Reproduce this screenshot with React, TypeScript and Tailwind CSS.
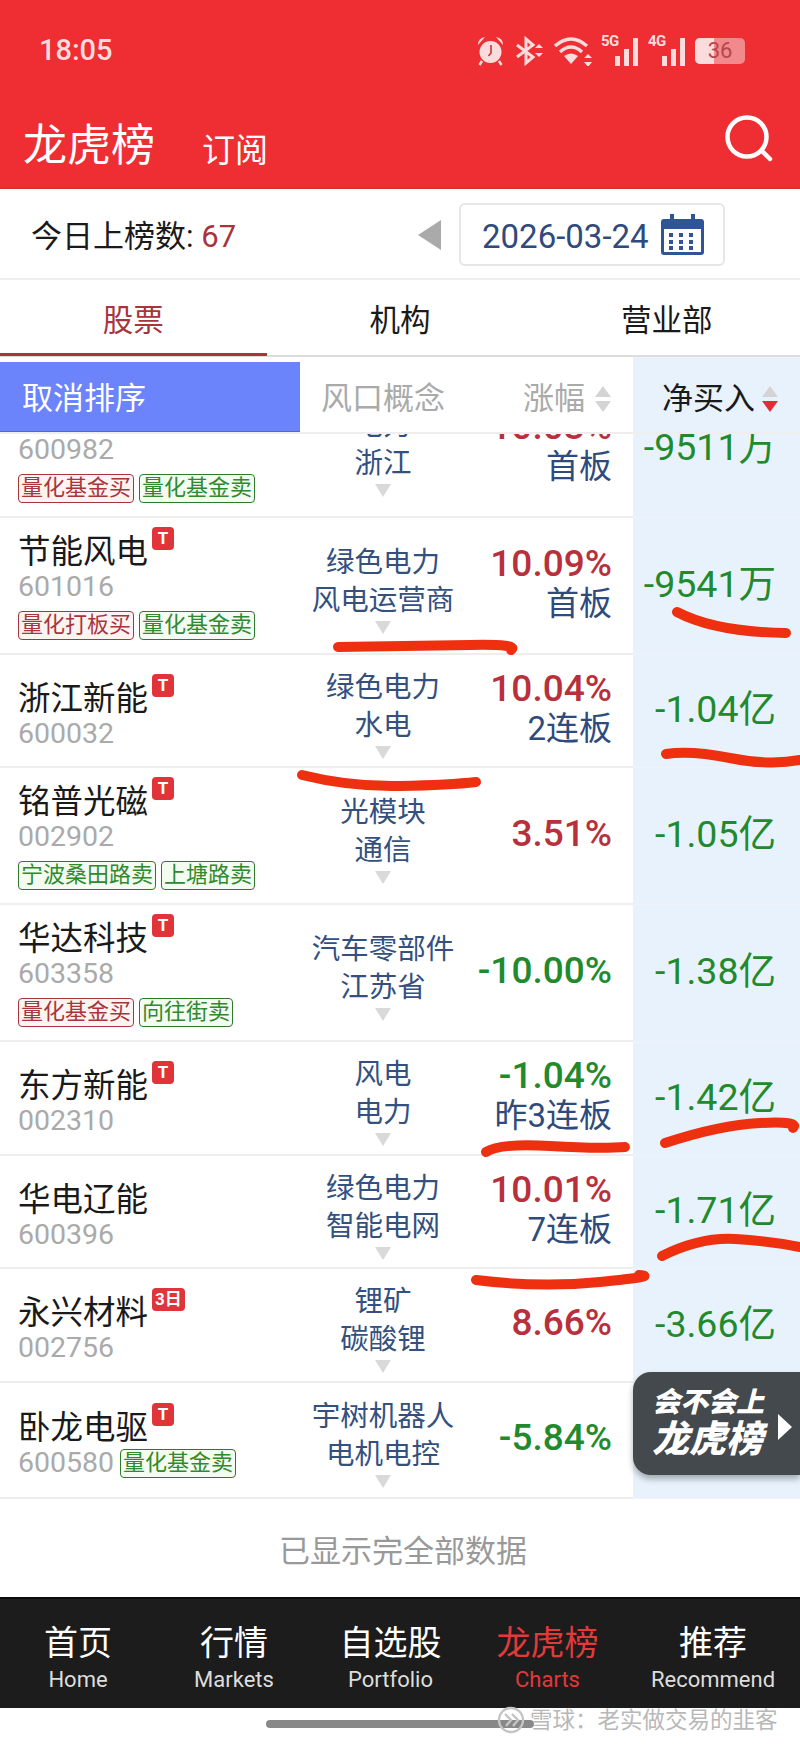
import React from 'react';

type Tag = { text: string; kind: 'buy' | 'sell' };

type Row = {
  name: string;
  badge?: string;
  code: string;
  tags?: Tag[];
  inlineTag?: Tag;
  concepts: [string, string];
  pct: string;
  up: boolean;
  board?: string;
  net: string;
};

const buy = (text: string): Tag => ({ text, kind: 'buy' });
const sell = (text: string): Tag => ({ text, kind: 'sell' });

const rows: (Row & { height: string })[] = [
  { height: 'h-[137px]', name: '节能风电', badge: 'T', code: '601016', tags: [buy('量化打板买'), sell('量化基金卖')], concepts: ['绿色电力', '风电运营商'], pct: '10.09%', up: true, board: '首板', net: '-9541万' },
  { height: 'h-[113px]', name: '浙江新能', badge: 'T', code: '600032', concepts: ['绿色电力', '水电'], pct: '10.04%', up: true, board: '2连板', net: '-1.04亿' },
  { height: 'h-[137px]', name: '铭普光磁', badge: 'T', code: '002902', tags: [sell('宁波桑田路卖'), sell('上塘路卖')], concepts: ['光模块', '通信'], pct: '3.51%', up: true, net: '-1.05亿' },
  { height: 'h-[137px]', name: '华达科技', badge: 'T', code: '603358', tags: [buy('量化基金买'), sell('向往街卖')], concepts: ['汽车零部件', '江苏省'], pct: '-10.00%', up: false, net: '-1.38亿' },
  { height: 'h-[114px]', name: '东方新能', badge: 'T', code: '002310', concepts: ['风电', '电力'], pct: '-1.04%', up: false, board: '昨3连板', net: '-1.42亿' },
  { height: 'h-[113px]', name: '华电辽能', code: '600396', concepts: ['绿色电力', '智能电网'], pct: '10.01%', up: true, board: '7连板', net: '-1.71亿' },
  { height: 'h-[114px]', name: '永兴材料', badge: '3日', code: '002756', concepts: ['锂矿', '碳酸锂'], pct: '8.66%', up: true, net: '-3.66亿' },
  { height: 'h-[116px]', name: '卧龙电驱', badge: 'T', code: '600580', inlineTag: sell('量化基金卖'), concepts: ['宇树机器人', '电机电控'], pct: '-5.84%', up: false, net: '-3.72亿' },
];

const clippedRow: Row = { name: '宁波能源', badge: 'T', code: '600982', tags: [buy('量化基金买'), sell('量化基金卖')], concepts: ['电力', '浙江'], pct: '10.03%', up: true, board: '首板', net: '-9511万' };

const navItems = [
  { zh: '首页', en: 'Home' },
  { zh: '行情', en: 'Markets' },
  { zh: '自选股', en: 'Portfolio' },
  { zh: '龙虎榜', en: 'Charts', active: true },
  { zh: '推荐', en: 'Recommend' },
];

const TagChip = ({ tag }: { tag: Tag }) => (
  <span
    className={`h-[29px] px-[2px] rounded-[4px] border text-[22px] leading-[26px] whitespace-nowrap ${
      tag.kind === 'buy'
        ? 'border-[#a8343c] bg-[#fdf4f2] text-[#a8343c]'
        : 'border-[#2c7a2c] bg-[#f4fbf1] text-[#2f8a2f]'
    }`}
  >
    {tag.text}
  </span>
);

const SortArrows = ({ active }: { active?: boolean }) => (
  <svg width="16" height="26" viewBox="0 0 16 26" className="shrink-0">
    <polygon points="8,0 16,11 0,11" fill="#d4d4d4" />
    <polygon points="8,26 16,15 0,15" fill={active ? '#dc2f36' : '#d4d4d4'} />
  </svg>
);

const TableRow = ({ row }: { row: Row }) => (
  <div className="grid grid-cols-[300px_166px_167px_167px] h-full">
    <div className={`flex flex-col justify-center pl-[18px] border-b-2 border-[#eeeeee] ${row.tags ? '' : 'pt-[8px]'}`}>
      <div className="flex h-[38px] items-center pt-[4px]">
        <span className="text-[32.5px] leading-[38px] text-[#1a1a1a] whitespace-nowrap">{row.name}</span>
        {row.badge && (
          <span className="self-start -mt-[8px] ml-[4px] h-[23px] px-[3px] min-w-[22px] rounded-[4px] bg-[#e1333a] text-white text-[17px] leading-[23px] font-bold text-center">
            {row.badge}
          </span>
        )}
      </div>
      <div className="flex h-[36px] items-center gap-[6px]">
        <span className="text-[28.5px] leading-[36px] text-[#aaaaaa]">{row.code}</span>
        {row.inlineTag && <TagChip tag={row.inlineTag} />}
      </div>
      {row.tags && (
        <div className="flex gap-[5px] mt-[6px]">
          {row.tags.map((t) => (
            <TagChip key={t.text} tag={t} />
          ))}
        </div>
      )}
    </div>
    <div className="flex flex-col items-center justify-center pt-[7px] border-b-2 border-[#eeeeee] text-[28.5px] leading-[38px] text-[#34507f]">
      <span className="whitespace-nowrap">{row.concepts[0]}</span>
      <span className="whitespace-nowrap">{row.concepts[1]}</span>
      <svg width="16" height="14" viewBox="0 0 16 14" className="mt-[1px]">
        <polygon points="0,0 16,0 8,13" fill="#d9d9d9" />
      </svg>
    </div>
    <div className="flex flex-col items-end justify-center pr-[21px] pb-[4px] border-b-2 border-[#eeeeee]">
      <span className={`text-[37px] leading-[40px] font-medium ${row.up ? 'text-[#b8303c]' : 'text-[#228a2c]'}`}>{row.pct}</span>
      {row.board && <span className="text-[33px] leading-[40px] text-[#2f4a7c] whitespace-nowrap">{row.board}</span>}
    </div>
    <div className="flex items-center justify-end pr-[24px] pb-[4px] bg-[#e8f2fc] border-b border-[#f0f4f8] text-[37.5px] leading-[40px] text-[#228a2c] whitespace-nowrap">
      {row.net}
    </div>
  </div>
);

const StatusIcons = () => (
  <div className="flex items-center text-[#fbdcdc]">
    {/* alarm */}
    <svg width="29" height="30" viewBox="0 0 29 30" fill="currentColor">
      <circle cx="14.5" cy="16" r="11" />
      <path d="M2 9 Q2 2 9 1 Z M27 9 Q27 2 20 1 Z" />
      <path d="M6 25 L3.5 29 M23 25 L25.5 29" stroke="currentColor" strokeWidth="2.5" />
      <path d="M15 9 V17 L12.5 20" stroke="#c9343c" strokeWidth="1.6" fill="none" />
    </svg>
    {/* bluetooth */}
    <svg width="29" height="30" viewBox="0 0 29 30" className="ml-[10px]" fill="none" stroke="currentColor" strokeWidth="3">
      <path d="M2 9 L18 21 L11 27 V3 L18 9 L2 21" />
      <path d="M24 8 L28 12 H20 Z M24 21 L28 17 H20 Z" fill="currentColor" stroke="none" />
    </svg>
    {/* wifi */}
    <svg width="38" height="30" viewBox="0 0 38 30" className="ml-[10px]" fill="none" stroke="currentColor" strokeWidth="3.4">
      <path d="M1 10 Q17 -4 33 10" />
      <path d="M6 16 Q17 6 28 16" />
      <path d="M17 28 L10 20 Q17 15 24 20 Z" fill="currentColor" stroke="none" />
      <path d="M34 18 L38 22 H30 Z M34 31 L38 26 H30 Z" fill="currentColor" stroke="none" />
    </svg>
    {['5G', '4G'].map((g, i) => (
      <div key={g} className={`relative w-[37px] h-[30px] ${i === 0 ? 'ml-[9px]' : 'ml-[10px]'}`}>
        <span className="absolute left-0 -top-[3px] text-[15px] leading-[16px] font-bold tracking-[-0.5px]">{g}</span>
        <div className="absolute right-0 bottom-0 flex items-end gap-[4px]">
          <div className="w-[5px] h-[10px] bg-current" />
          <div className="w-[5px] h-[17px] bg-current" />
          <div className="w-[5px] h-[28px] bg-current" />
        </div>
      </div>
    ))}
    {/* battery */}
    <div className="relative ml-[10px] w-[50px] h-[26px] rounded-[5px] bg-[#f28a8d] overflow-hidden flex items-center justify-center">
      <div className="absolute left-0 top-0 bottom-0 w-[19px] bg-[#fbdcdc]" />
      <span className="relative text-[22px] leading-[26px] text-[#b8454b]">36</span>
    </div>
  </div>
);

const Scribbles = () => (
  <svg width="800" height="1744" viewBox="0 0 800 1744" className="absolute left-0 top-0 pointer-events-none" fill="none" stroke="#ee3011" strokeWidth="10" strokeLinecap="round">
    <path d="M677 612 Q 715 632 786 633" />
    <path d="M338 647 Q 420 646 470 645 T 511 650" />
    <path d="M666 754 Q 690 750 730 758 T 800 760" />
    <path d="M302 775 Q 350 787 400 786 T 476 782" />
    <path d="M486 1152 Q 500 1143 550 1146 T 625 1147" />
    <path d="M665 1143 Q 720 1125 760 1123 T 793 1128" />
    <path d="M662 1256 Q 700 1237 735 1239 T 800 1247" />
    <path d="M476 1280 Q 540 1288 600 1282 T 639 1275" />
  </svg>
);

export default function App() {
  return (
    <div className="relative w-[800px] h-[1744px] overflow-hidden bg-white font-['Roboto','Noto_Sans_CJK_SC',sans-serif]">
      {/* Header */}
      <header className="h-[189px] bg-[#ee2e33] border-b-2 border-[#c9383c] flex flex-col">
        <div className="h-[102px] shrink-0 flex items-center justify-between pl-[39px] pr-[55px]">
          <span className="text-[29px] font-medium text-[#fbdcdc]">18:05</span>
          <StatusIcons />
        </div>
        <div className="flex items-center justify-between pl-[23px] pr-[26px] mt-[14px]">
          <div className="flex items-end">
            <span className="text-[44px] leading-[60px] text-white">龙虎榜</span>
            <span className="ml-[47px] text-[33px] leading-[50px] text-white">订阅</span>
          </div>
          <svg width="50" height="48" viewBox="0 0 50 48" fill="none" stroke="white" strokeWidth="4.5" className="-mt-[14px]">
            <circle cx="23" cy="22" r="19.5" />
            <path d="M38 36 L46 44" strokeLinecap="round" />
          </svg>
        </div>
      </header>

      {/* Date bar */}
      <div className="h-[91px] flex items-center justify-between pl-[31px] pr-[75px] pt-[2px] border-b-2 border-[#eeeeee]">
        <div className="pt-[6px] text-[31px] text-[#1a1a1a]">
          今日上榜数: <span className="text-[#a8343c]">67</span>
        </div>
        <div className="flex items-center gap-[18px]">
          <svg width="23" height="30" viewBox="0 0 23 30">
            <polygon points="23,0 23,30 0,15" fill="#aaaaaa" />
          </svg>
          <div className="w-[266px] h-[63px] rounded-[6px] border-2 border-[#e6e6e6] flex items-center pl-[21px] gap-[12px]">
            <span className="pt-[5px] text-[33px] text-[#2f4a7c]">2026-03-24</span>
            <svg width="43" height="41" viewBox="0 0 43 41">
              <rect x="0" y="5" width="43" height="36" rx="3" fill="#2f5597" />
              <rect x="3" y="15" width="37" height="23" fill="#ffffff" />
              <rect x="9" y="0" width="4" height="10" fill="#2f5597" />
              <rect x="30" y="0" width="4" height="10" fill="#2f5597" />
              {[8, 18, 28].map((x) =>
                [19, 26, 32].map((y) => <rect key={`${x}-${y}`} x={x} y={y} width="4" height="4" fill="#2f5597" />),
              )}
            </svg>
          </div>
        </div>
      </div>

      {/* Tabs */}
      <div className="h-[77px] grid grid-cols-3 border-b-2 border-[#dddddd] text-[30.5px] text-[#1a1a1a]">
        <div className="relative flex items-center justify-center pt-[6px] text-[#a8343c]">
          股票
          <div className="absolute left-0 right-0 -bottom-[1px] h-[3px] bg-[#a8343c]" />
        </div>
        <div className="flex items-center justify-center pt-[6px]">机构</div>
        <div className="flex items-center justify-center pt-[6px]">营业部</div>
      </div>

      {/* Sort header */}
      <div className="h-[77px] grid grid-cols-[300px_166px_167px_167px] text-[31px] border-b-2 border-[#eeeeee]">
        <div className="pt-[5px]">
          <div className="h-full bg-[#6b84fb] border-b border-[#5468c8] flex items-center pl-[22px] pt-[6px] text-white">取消排序</div>
        </div>
        <div className="flex items-center justify-center pt-[9px] text-[#aaaaaa]">风口概念</div>
        <div className="flex items-center justify-end gap-[10px] pr-[22px] pt-[9px] text-[#aaaaaa]">
          涨幅
          <SortArrows />
        </div>
        <div className="flex items-center justify-end gap-[7px] pr-[22px] pt-[9px] bg-[#e8f2fc] text-[#1a1a1a]">
          净买入
          <SortArrows active />
        </div>
      </div>

      {/* Table */}
      <div className="h-[84px] overflow-hidden flex flex-col justify-end">
        <div className="h-[137px] shrink-0">
          <TableRow row={clippedRow} />
        </div>
      </div>
      {rows.map((row) => (
        <div key={row.code} className={row.height}>
          <TableRow row={row} />
        </div>
      ))}

      <div className="h-[98px] flex items-center justify-center pl-[6px] pt-[8px] text-[31px] text-[#999999]">已显示完全部数据</div>

      {/* Bottom nav */}
      <nav className="h-[111px] bg-[#1c1c1c] border-t-2 border-[#0a0a0a] grid grid-cols-[156px_156px_157px_157px_174px] pt-[21px]">
        {navItems.map((item) => (
          <div key={item.en} className={`flex flex-col items-center ${item.active ? 'text-[#e03a3a]' : 'text-white'}`}>
            <span className="text-[34px] leading-[46px]">{item.zh}</span>
            <span className={`text-[22px] leading-[28px] ${item.active ? '' : 'text-[#dddddd]'}`}>{item.en}</span>
          </div>
        ))}
      </nav>
      <div className="h-[36px] pt-[12px] pl-[266px]">
        <div className="w-[268px] h-[8px] rounded-full bg-[#888888]" />
      </div>

      {/* Floating promo */}
      <div className="absolute right-0 top-[1372px] w-[167px] h-[103px] rounded-l-[18px] bg-[#43494c] shadow-[0_4px_6px_rgba(0,0,0,0.3)] flex items-center pl-[19px] text-white italic font-black">
        <div className="flex flex-col">
          <span className="text-[28px] leading-[33px] whitespace-nowrap">会不会上</span>
          <span className="text-[37px] leading-[42px] whitespace-nowrap">龙虎榜</span>
        </div>
        <svg width="14" height="26" viewBox="0 0 14 26" className="absolute left-[145px] top-[42px]">
          <polygon points="0,0 14,13 0,26" fill="#ffffff" />
        </svg>
      </div>

      <Scribbles />

      {/* Watermark */}
      <div className="absolute left-[497px] top-[1705px] flex items-center gap-[5px] text-[22.5px] leading-[28px] text-[#b8b8b8] whitespace-nowrap">
        <svg width="28" height="30" viewBox="0 0 28 30" fill="none" stroke="#c4c4c4" strokeWidth="2.4">
          <circle cx="14" cy="15" r="12" />
          <path d="M8 9 L14 15 L9 21 M15 9 L21 15 L16 21" />
        </svg>
        雪球：老实做交易的韭客
      </div>
    </div>
  );
}
